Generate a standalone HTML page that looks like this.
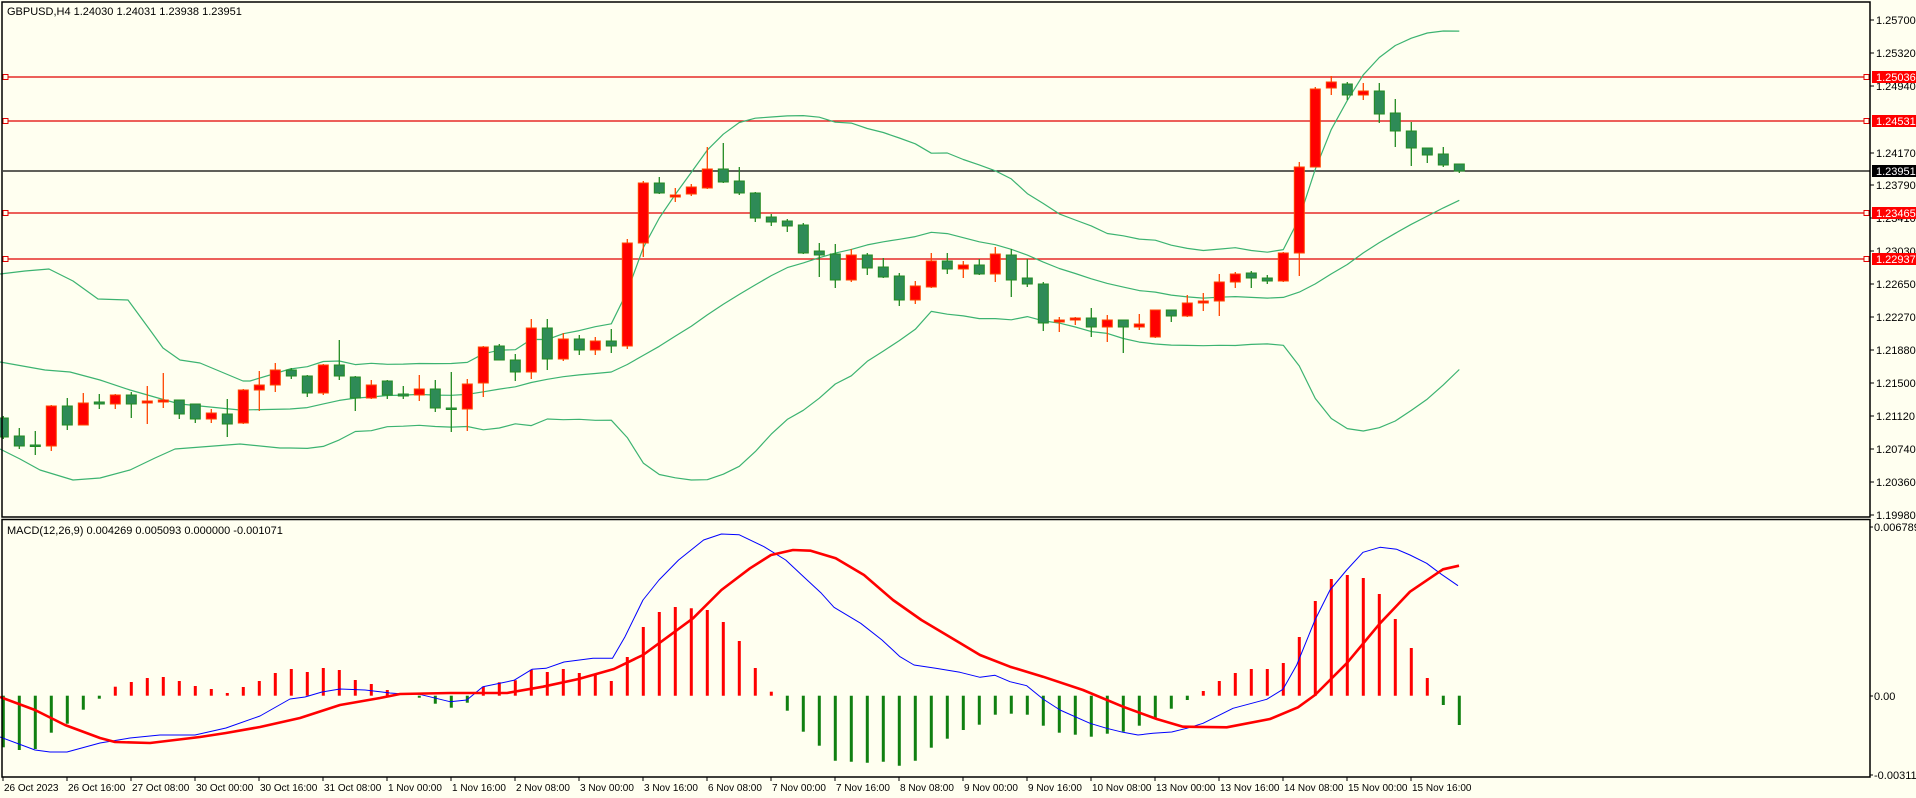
<!DOCTYPE html>
<html><head><meta charset="utf-8"><style>
html,body{margin:0;padding:0;background:#fffff0;}
svg{display:block;}
text{font-family:"Liberation Sans","DejaVu Sans",sans-serif;font-size:11px;fill:#000;}
text.t{font-size:10px;}
</style></head><body>
<svg id="s" width="1916" height="798" viewBox="0 0 1916 798" xmlns="http://www.w3.org/2000/svg">
<rect x="0" y="0" width="1916" height="798" fill="#fffff0"/>
<g id="g"></g>
<rect x="2" y="2" width="1868" height="515" fill="none" stroke="#000" stroke-width="1.5"/>
<rect x="2" y="519.5" width="1868" height="257.5" fill="none" stroke="#000" stroke-width="1.5"/>
<text x="7" y="15">GBPUSD,H4  1.24030 1.24031 1.23938 1.23951</text>
<text x="7" y="534">MACD(12,26,9) 0.004269 0.005093 0.000000 -0.001071</text>
</svg>
<script>
var C=[
['g',418,437,416,439],['g',436,446,428,449],['g',445,446,431,455],['r',406,446,405,451],['g',406,425,398,430],
['r',403,425,393,425],['g',402,404,394,409],['r',395,404,394,409],['g',395,404,392,418],['r',401,403,386,424],
['r',400,402,373,408],['g',400,414,400,419],['g',404,419,404,423],['r',413,419,409,423],['g',414,424,399,437],
['r',390,423,389,424],['r',385,390,371,411],['r',370,385,363,392],['g',370,376,368,379],['g',376,393,375,397],
['r',365,393,364,395],['g',365,376,340,380],['g',377,398,376,411],['r',385,398,380,399],['g',381,395,380,399],
['g',394,396,386,399],['r',389,395,375,401],['g',389,408,380,412],['g',408,409,372,432],['r',384,409,379,431],
['r',347,383,346,397],['g',346,360,344,360],['g',360,372,354,381],['r',328,372,319,379],['g',328,359,319,370],
['r',339,359,333,361],['g',339,350,335,355],['r',341,350,337,355],['g',341,346,329,353],['r',243,346,239,349],
['r',183,243,181,257],['g',183,193,177,194],['r',195,197,188,202],['r',187,194,184,196],['r',169,188,147,189],
['g',169,182,143,183],['g',181,193,167,195],['g',193,218,192,222],['g',217,222,214,226],['g',221,226,219,232],
['g',225,253,223,254],['g',251,255,243,277],['g',254,280,244,288],['r',255,280,249,282],['g',255,268,253,275],
['g',267,277,258,278],['g',276,300,273,306],['r',286,300,281,304],['r',261,287,253,288],['g',261,269,253,274],
['r',265,269,261,278],['g',265,274,259,275],['r',254,274,247,282],['g',255,280,249,297],['g',278,284,259,287],
['g',284,323,282,331],['r',320,322,317,332],['r',318,320,317,325],['g',318,327,308,337],['r',320,327,315,342],
['g',320,327,320,353],['r',324,327,314,330],['r',310,337,310,338],['g',310,316,310,322],['r',303,316,295,317],
['r',301,303,293,311],['r',282,301,274,316],['r',274,282,272,288],['g',273,278,271,288],['g',278,281,275,284],
['r',253,281,252,282],['r',167,253,162,276],['r',89,167,87,167],['r',82,88,76,95],['g',84,95,82,100],
['r',91,95,83,100],['g',91,114,83,123],['g',113,131,99,147],['g',131,148,122,166],['g',148,155,148,163],
['g',154,165,147,167],['g',164,171,164,173]];
function X(i){return 3.3+16*i;}
var h='';
function line(x1,y1,x2,y2,c,w){h+='<line x1="'+x1+'" y1="'+y1+'" x2="'+x2+'" y2="'+y2+'" stroke="'+c+'" stroke-width="'+(w||1)+'"/>';}
function poly(pts,c,w){h+='<polyline fill="none" stroke="'+c+'" stroke-width="'+w+'" stroke-linejoin="round" points="'+pts.map(function(p){return p[0].toFixed(1)+','+p[1].toFixed(1)}).join(' ')+'"/>';}
[[77,'#e00000'],[121,'#e00000'],[213,'#e00000'],[259,'#e00000']].forEach(function(l){
 line(3,l[0],1870,l[0],l[1],1.3);
 h+='<rect x="3" y="'+(l[0]-2.5)+'" width="5" height="5" fill="#fffff0" stroke="#e00000"/>';
 h+='<rect x="1864" y="'+(l[0]-2.5)+'" width="5" height="5" fill="#fffff0" stroke="#e00000"/>';
});
line(3,171,1870,171,'#000',1.3);
var cl=C.map(function(c){return c[0]=='g'?c[2]:c[1];});
var up=[[0,274],[25,271],[49,269],[73,281],[98,299],[128,300],[150,330],[163,348],[180,360],[200,363],[243,381],[250,381],[270,375],[290,369]];
var md=[[0,362],[45,370],[70,372],[100,380],[130,390],[165,400],[180,404],[240,410],[290,409]];
var lo=[[0,449],[20,459],[40,470],[73,480],[100,478],[130,470],[155,458],[175,449],[240,444],[280,448],[290,448]];
for(var i=19;i<C.length;i++){var s=0;for(var j=i-19;j<=i;j++)s+=cl[j];var m=s/20,v=0;for(j=i-19;j<=i;j++)v+=(cl[j]-m)*(cl[j]-m);var sd=Math.sqrt(v/20);
 up.push([X(i),m-2*sd]);md.push([X(i),m]);lo.push([X(i),m+2*sd]);}
poly(up,'#3cb371',1.2);poly(md,'#3cb371',1.2);poly(lo,'#3cb371',1.2);
C.forEach(function(c,i){var x=X(i);var col=c[0]=='g'?'#228b22':'#ff4500';var f=c[0]=='g'?'#2e8b57':'#ff0000';
 line(x,c[3],x,c[4],col,1.3);
 var t=c[1],b=c[2];if(b-t<1.5){b=t+1.5;}
 h+='<rect x="'+(x-5)+'" y="'+t+'" width="10" height="'+(b-t)+'" fill="'+f+'" stroke="'+col+'" stroke-width="1"/>';});
var Z=695.7;
var H=[747.3,750,749,732.7,723.7,709.7,698.7,686.7,682,678,677,681,686,689,693,687,681,673,669,672,668,670,680,684,690,695.7,
697.7,703.7,707.7,702.7,686.7,682.3,680.3,669.7,672,669,673,674.3,681,657,627,612,607,608.3,610,622,641,668,691.7,
710.7,731.7,745.7,760.7,761.7,762.7,761.7,765.7,760.7,747.7,738.7,
730,724.7,714.7,713.7,714.7,725.7,732.7,734.7,736.7,733.7,731.7,725.7,718,708.7,700,
691,681,673,669,669,663,637,601,579,575,578,594,619,648,678,705,725];
H.forEach(function(y,i){var x=X(i);if(Math.abs(y-Z)<0.8)return;
 line(x,Z,x,y,y<Z?'#ff0000':'#108010',3);});
var blue=[[0,737],[35,750],[50,752],[67,752],[100,743],[130,738],[160,735],[195,735],[226,728],[260,716],[290,699],[305,697],[322,692],[340,689],[365,690],[390,693],
[400,693.7],[419.6,694.3],[450,701.7],[466.8,700],[482.9,686.7],[514,680.3],[532,669.3],[546,668.3],[564,662],[593,658.3],[612.5,658.3],[625,636.7],[643,600],[659,580],[678.6,560],[703.6,540],[721.4,534],[739,534.7],[764,546.7],[785.7,560],[803.6,576.7],[821.4,593.3],[834,607.3],[860.7,623.3],[882,640],[900,656.7],[914,665],[935.7,668.3],[960,672.3],
[980,677.3],[995,675.3],[1010,681.7],[1026.7,685.7],[1043,699],[1060,710],[1090,723.3],[1106.7,728.3],[1123,732.3],[1138,735],[1153,733.3],[1171.7,732],[1186.7,728.3],[1203,723.3],[1233,708.3],[1266.7,699.3],[1283,689.3],[1296.7,665],[1315,620],[1330,590],[1346.7,570],[1363,552.3],[1380,547.3],[1396.7,549.3],[1410,555],[1426.7,563.3],[1440,573.3],[1458,585.7]];
var red=[[0,697],[35,710],[65,725],[100,738],[115,742],[150,743],[200,737],[226,733],[260,727],[300,718],[340,705],[380,698],
[400,694],[450,693],[507,693],[543,686.7],[578.6,679],[614,669],[643,655],[668,636.7],[693,618.3],[721.4,590],[750,568.3],[771,555],[793,550],[810.7,550.7],[835.7,558.3],[864,575],[893,600],[921.4,620],[960,643],
[980,655],[1010,666.7],[1043,676.7],[1083,690],[1123,706.7],[1156.7,719],[1183,726.7],[1226.7,727.3],[1270,719],[1298,707.3],[1315,695],[1346.7,663.3],[1380,623.3],[1410,591.7],[1443,569.3],[1459,565.7]];
poly(blue,'#0000ff',1);poly(red,'#ff0000',2.6);
[['1.25700',20],['1.25320',53],['1.24940',86],['1.24170',153],['1.23790',185],['1.23410',218],['1.23030',251],['1.22650',284],['1.22270',317],['1.21880',350],['1.21500',383],['1.21120',416],['1.20740',449],['1.20360',482],['1.19980',515]].forEach(function(p){
 line(1870,p[1],1874,p[1],'#000',1);h+='<text x="1876" y="'+(p[1]+4)+'">'+p[0]+'</text>';});
[[77,'#ff0000','1.25036'],[121,'#ff0000','1.24531'],[171,'#000','1.23951'],[213,'#ff0000','1.23465'],[259,'#ff0000','1.22937']].forEach(function(l){
 h+='<rect x="1872" y="'+(l[0]-6)+'" width="44" height="12" fill="'+l[1]+'"/><text x="1876" y="'+(l[0]+4)+'" style="fill:#fff">'+l[2]+'</text>';});
[['0.006789',527],['0.00',696],['-0.003115',775]].forEach(function(p){line(1870,p[1],1873,p[1],'#000',1);h+='<text x="1874" y="'+(p[1]+4)+'">'+p[0]+'</text>';});
var T=['26 Oct 2023','26 Oct 16:00','27 Oct 08:00','30 Oct 00:00','30 Oct 16:00','31 Oct 08:00','1 Nov 00:00','1 Nov 16:00','2 Nov 08:00','3 Nov 00:00','3 Nov 16:00','6 Nov 08:00','7 Nov 00:00','7 Nov 16:00','8 Nov 08:00','9 Nov 00:00','9 Nov 16:00','10 Nov 08:00','13 Nov 00:00','13 Nov 16:00','14 Nov 08:00','15 Nov 00:00','15 Nov 16:00'];
T.forEach(function(t,k){var x=3+64*k;line(x,777,x,781,'#000',1);h+='<text class="t" x="'+(x+1)+'" y="791">'+t+'</text>';});
document.getElementById('g').innerHTML=h;
</script>
</body></html>
